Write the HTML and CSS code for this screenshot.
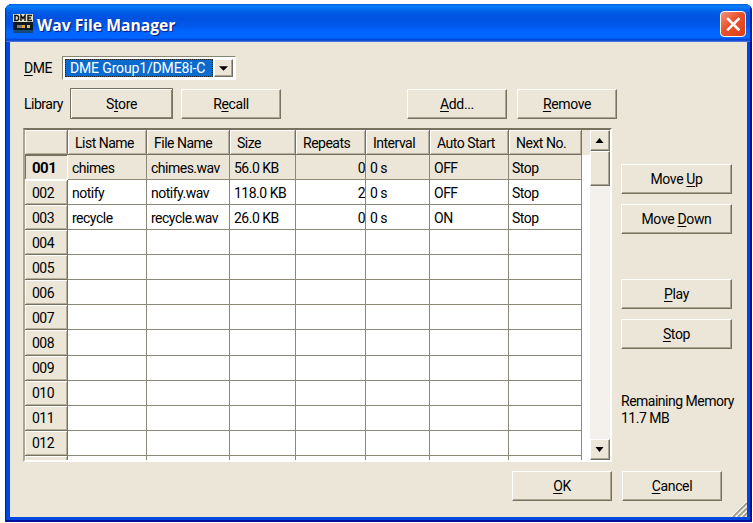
FILE: index.html
```html
<!DOCTYPE html>
<html lang="en">
<head>
<meta charset="utf-8">
<title>Wav File Manager</title>
<link rel="stylesheet" href="styles.css">
</head>
<body>
<div class="window">
  <header class="titlebar">
    <svg class="app-icon" viewBox="0 0 20 19"><rect width="20" height="8" fill="#e8e4cc"/><path d="M2 1.500v5M1 1.500h3l1.500 1v3l-1.500 1H1M8 7V1.500l2 3 2-3V7M19 1.500h-4v5h4M15 4H18" fill="none" stroke="#151515" stroke-width="1.500"/><rect y="8" width="20" height="9" fill="#101820"/><rect x="4" y="11" width="5" height="3" fill="#777d86"/><rect x="9" y="11" width="3" height="3" fill="#e2a62d"/><rect x="14" y="11" width="3" height="3" fill="#d2c36a"/><rect y="16" width="20" height="3" fill="#174a78"/></svg>
    <h1>Wav File Manager</h1>
    <button class="close" aria-label="Close"><svg viewBox="0 0 24 24"><path d="M7 7l10.500 10.500M17.500 7L7 17.500" stroke="#fff" stroke-width="2.500" stroke-linecap="square"/></svg></button>
  </header>
  <main class="client">
    <div class="device">
      <span class="label"><u>D</u>ME</span>
      <div class="select"><span class="value">DME Group1/DME8i-C</span><span class="drop"><svg viewBox="0 0 8 4"><path d="M0 0h8L4 4z"/></svg></span></div>
    </div>
    <div class="toolbar">
      <span class="label">Library</span>
      <button class="btn default">S<u>t</u>ore</button>
      <button class="btn recall">R<u>e</u>call</button>
      <button class="btn add"><u>A</u>dd...</button>
      <button class="btn remove"><u>R</u>emove</button>
    </div>
    <div class="body">
      <div class="listbox">
        <table>
          <colgroup><col class="c0"><col class="c1"><col class="c2"><col class="c3"><col class="c4"><col class="c5"><col class="c6"><col class="c7"></colgroup>
          <thead><tr><th></th><th>List Name</th><th>File Name</th><th>Size</th><th>Repeats</th><th>Interval</th><th>Auto Start</th><th>Next No.</th></tr></thead>
          <tbody>
            <tr class="selected"><th>001</th><td>chimes</td><td>chimes.wav</td><td>56.0 KB</td><td class="num">0</td><td>0 s</td><td>OFF</td><td>Stop</td></tr>
            <tr><th>002</th><td>notify</td><td>notify.wav</td><td>118.0 KB</td><td class="num">2</td><td>0 s</td><td>OFF</td><td>Stop</td></tr>
            <tr><th>003</th><td>recycle</td><td>recycle.wav</td><td>26.0 KB</td><td class="num">0</td><td>0 s</td><td>ON</td><td>Stop</td></tr>
            <tr><th>004</th><td></td><td></td><td></td><td></td><td></td><td></td><td></td></tr>
            <tr><th>005</th><td></td><td></td><td></td><td></td><td></td><td></td><td></td></tr>
            <tr><th>006</th><td></td><td></td><td></td><td></td><td></td><td></td><td></td></tr>
            <tr><th>007</th><td></td><td></td><td></td><td></td><td></td><td></td><td></td></tr>
            <tr><th>008</th><td></td><td></td><td></td><td></td><td></td><td></td><td></td></tr>
            <tr><th>009</th><td></td><td></td><td></td><td></td><td></td><td></td><td></td></tr>
            <tr><th>010</th><td></td><td></td><td></td><td></td><td></td><td></td><td></td></tr>
            <tr><th>011</th><td></td><td></td><td></td><td></td><td></td><td></td><td></td></tr>
            <tr><th>012</th><td></td><td></td><td></td><td></td><td></td><td></td><td></td></tr>
            <tr><th></th><td></td><td></td><td></td><td></td><td></td><td></td><td></td></tr>
          </tbody>
        </table>
        <div class="gutter"></div>
        <div class="scrollbar">
          <span class="arrow up"><svg viewBox="0 0 8 5"><path d="M0 5h8L4 0z"/></svg></span>
          <span class="thumb"></span>
          <span class="arrow down"><svg viewBox="0 0 8 5"><path d="M0 0h8L4 5z"/></svg></span>
        </div>
      </div>
      <aside class="side">
        <button class="btn">Move <u>U</u>p</button>
        <button class="btn">Move <u>D</u>own</button>
        <button class="btn play"><u>P</u>lay</button>
        <button class="btn"><u>S</u>top</button>
        <p class="memory">Remaining Memory<br>11.7 MB</p>
      </aside>
    </div>
    <footer class="actions">
      <button class="btn"><u>O</u>K</button>
      <button class="btn"><u>C</u>ancel</button>
    </footer>
    <svg class="grip" viewBox="0 0 16 16"><path d="M2 16L16 2M7 16l9-9M12 16l4-4" stroke="#a5a18f" stroke-width="2"/><path d="M0 16L16 0M5 16L16 5M10 16l6-6" stroke="#fff" stroke-width="1"/></svg>
  </main>
</div>
</body>
</html>
```
FILE: styles.css
```css
* { box-sizing: border-box; }
body { margin: 0; width: 753px; height: 523px; overflow: hidden; background: #fff; padding: 4px 1px 1px 5px; color: #000; font: 14px/16px "Roboto", "Liberation Sans", sans-serif; letter-spacing: -0.5px; }
.window { width: 747px; height: 518px; display: flex; flex-direction: column; border-radius: 7px 7px 0 0; background: #0047e0; overflow: hidden; box-shadow: inset 1px 0 #0019a8, inset -2px -2px #00109c; }
.titlebar { height: 38px; flex: none; display: flex; align-items: center; padding: 1px 6px 0 8px; background: linear-gradient(#0058d8 0, #0a82ff 2px, #0874f6 4px, #005ce6 8px, #0052e0 14px, #0058ec 22px, #0066ff 28px, #0066ff 34px, #003bd0 36px, #5b86e0 38px); box-shadow: inset 1px 0 #0030c0, inset -2px 0 #0022b4; }
.app-icon { width: 20px; height: 19px; margin-top: -1px; }
h1 { margin: 3px 0 0 4px; font: bold 15.7px/20px "Open Sans", "Noto Sans", sans-serif; letter-spacing: 0; color: #fff; text-shadow: 1px 1px 1px #0a1883; white-space: nowrap; }
.close { margin-left: auto; padding: 0; width: 26px; height: 26px; border: 1px solid #fff; border-radius: 4px; background: linear-gradient(135deg, #f0957c, #e9512c 45%, #dc3f16); }
.close svg { display: block; width: 24px; height: 24px; }
.client { position: relative; flex: 1; min-height: 0; margin: 0 5px 5px; background: #ece6d8; padding: 14px 0 0 13px; display: flex; flex-direction: column; }
.device { display: flex; height: 24px; align-items: center; }
.label { width: 39px; white-space: nowrap; padding-left: 1px; }
u { text-decoration-thickness: 1px; text-underline-offset: 2px; }
.select { display: flex; width: 174px; height: 24px; padding: 2px; border: 1px solid; border-color: #888473 #fff #fff #888473; background: #fff; }
.value { flex: 1; margin-right: 1px; padding-left: 5px; line-height: 18px; background: #0a6bce; color: #fff; outline: 1px dotted #222; outline-offset: -1px; letter-spacing: -0.15px; white-space: nowrap; }
.drop, .arrow, .thumb { background: #ece6d8; border: 1px solid; border-color: #fff #716d60 #716d60 #fff; box-shadow: inset -1px -1px #aaa592; display: flex; align-items: center; justify-content: center; }
.drop { width: 19px; }
.drop svg, .arrow svg { width: 9px; height: 5px; }
.toolbar { display: flex; height: 31px; margin-top: 8px; align-items: center; }
.toolbar .label { width: 47px; }
.btn { width: 100px; height: 30px; padding: 0; font: inherit; letter-spacing: -0.35px; color: #000; background: #ece6d8; border: 1px solid; border-color: #fff #77725f #77725f #fff; border-radius: 0; box-shadow: inset -1px -1px #aaa592; white-space: nowrap; }
.btn.default { width: 103px; height: 31px; border-color: #77725f; box-shadow: inset 1px 1px #fff, inset -1px -1px #8a8573; }
.recall { margin-left: 8px; }
.add { margin-left: 126px; }
.remove { margin-left: 10px; }
.body { display: flex; height: 334px; margin-top: 9px; }
.listbox { width: 589px; height: 334px; display: flex; border: 2px solid; border-color: #77725f #fff #fff #aaa592; background: #fff; overflow: hidden; }
table { width: 557px; table-layout: fixed; border-collapse: separate; border-spacing: 0; height: 351px; flex: none; }
.c0 { width: 43px; } .c1 { width: 79px; } .c2 { width: 83px; } .c3 { width: 66px; } .c4 { width: 70px; } .c5 { width: 64px; } .c6 { width: 79px; } .c7 { width: 73px; }
tr { height: 25px; }
th, td { height: 25px; padding: 1px 0 0 4px; text-align: left; font-weight: normal; white-space: nowrap; border: 0 solid #8c8979; border-width: 0 1px 1px 0; overflow: hidden; }
th { background: #ece6d8; padding-left: 7px; border-color: #77725f; box-shadow: inset 1px 1px #fff, inset -1px -1px #b5b09e; }
td { background: #fff; }
td:last-child { padding-left: 3px; }
.selected th { font-weight: bold; font-size: 15px; box-shadow: inset 1px 1px #77725f; border-color: #fff; }
.selected td { background: #ece6d8; }
td.num { text-align: right; padding-left: 0; }
.gutter { width: 8px; height: 25px; background: #ece6d8; }
.scrollbar { width: 21px; background: #f4f1ec; display: flex; flex-direction: column; }
.arrow { height: 21px; } .thumb { height: 35px; } .down { margin-top: auto; }
.side { width: 130px; padding: 36px 0 0 9px; display: flex; flex-direction: column; }
.side .btn { width: 111px; margin-bottom: 10px; flex: none; }
.side .play { margin-top: 35px; }
.memory { margin: 34px 0 0 0; line-height: 17px; white-space: nowrap; }
.actions { display: flex; gap: 10px; margin: 9px 0 0 489px; }
.grip { position: absolute; right: 0; bottom: 0; width: 16px; height: 16px; }
```
